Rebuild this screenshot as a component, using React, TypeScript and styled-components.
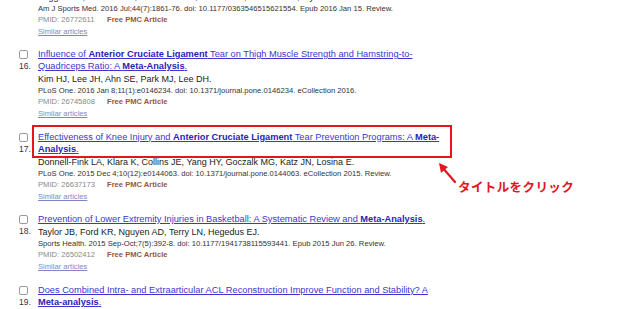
import React from 'react';
import styled, { createGlobalStyle } from 'styled-components';

const GlobalStyle = createGlobalStyle`
  html, body {
    margin: 0;
    padding: 0;
    background: #fff;
  }
  body {
    font-family: "Liberation Sans", Arial, sans-serif;
    overflow: hidden;
  }
`;

const Page = styled.div`
  position: relative;
  width: 640px;
  height: 309px;
  overflow: hidden;
  padding-left: 19px;
  box-sizing: border-box;
`;

const Item = styled.div<{ $cut?: boolean }>`
  display: flex;
  margin-top: ${p => (p.$cut ? '-10.5px' : '0')};
  margin-bottom: 11.5px;
`;

const Marker = styled.div`
  width: 19px;
  flex-shrink: 0;
  display: flex;
  flex-direction: column;
`;

const Checkbox = styled.span`
  display: block;
  width: 7px;
  height: 7px;
  margin-top: 2px;
  border: 1px solid #9a9a9a;
  border-radius: 2px;
  background: #fff;
`;

const Num = styled.span`
  margin-top: 1px;
  font-size: 8.5px;
  line-height: 12px;
  color: #333;
`;

const Content = styled.div`
  width: 407px;
`;

const Title = styled.a`
  position: relative;
  display: block;
  font-size: 9.25px;
  line-height: 12px;
  color: #3b36d0;
  text-decoration: underline;
  cursor: pointer;

  b {
    color: #2a23b8;
  }
`;

const Highlight = styled.span`
  position: absolute;
  top: -6px;
  left: -6px;
  right: -7px;
  bottom: -3px;
  border: 2px solid #e6141e;
  pointer-events: none;
`;

const Authors = styled.div`
  margin-top: 1px;
  font-size: 9px;
  line-height: 12px;
  color: #222;
`;

const Journal = styled.div`
  font-size: 7.65px;
  line-height: 11px;
  color: #333;
`;

const Meta = styled.div`
  display: flex;
  font-size: 7.6px;
  line-height: 12px;
  color: #888;
`;

const Pmid = styled.span`
  width: 69px;
  flex-shrink: 0;
`;

const Free = styled.span`
  font-weight: bold;
  color: #985735;
`;

const Similar = styled.a`
  display: block;
  font-size: 7.6px;
  line-height: 11px;
  color: #8585c4;
  text-decoration: underline;
`;

const Callout = styled.div`
  position: absolute;
  left: 437px;
  top: 162px;
  display: flex;
  align-items: flex-end;
`;

const CalloutText = styled.span`
  margin-left: 1px;
  margin-bottom: -11px;
  font-family: "Noto Sans CJK JP", sans-serif;
  font-weight: bold;
  font-size: 12.5px;
  letter-spacing: 0.4px;
  line-height: 16px;
  color: #e6141e;
  text-shadow: 0 0 2px #fff;
`;

type Article = {
  num?: string;
  title?: React.ReactNode;
  authors: string;
  journal: string;
  pmid: string;
  cut?: boolean;
  highlight?: boolean;
};

const articles: Article[] = [
  {
    cut: true,
    authors: 'Wiggins AJ, Grandhi RK, Schneider DK, Stanfield D, Webster KE, Myer GD.',
    journal: 'Am J Sports Med. 2016 Jul;44(7):1861-76. doi: 10.1177/0363546515621554. Epub 2016 Jan 15. Review.',
    pmid: '26772611',
  },
  {
    num: '16.',
    title: (
      <>
        Influence of <b>Anterior Cruciate Ligament</b> Tear on Thigh Muscle Strength and Hamstring-to-Quadriceps Ratio: A <b>Meta-Analysis</b>.
      </>
    ),
    authors: 'Kim HJ, Lee JH, Ahn SE, Park MJ, Lee DH.',
    journal: 'PLoS One. 2016 Jan 8;11(1):e0146234. doi: 10.1371/journal.pone.0146234. eCollection 2016.',
    pmid: '26745808',
  },
  {
    num: '17.',
    highlight: true,
    title: (
      <>
        Effectiveness of Knee Injury and <b>Anterior Cruciate Ligament</b> Tear Prevention Programs: A <b>Meta-Analysis</b>.
      </>
    ),
    authors: 'Donnell-Fink LA, Klara K, Collins JE, Yang HY, Goczalk MG, Katz JN, Losina E.',
    journal: 'PLoS One. 2015 Dec 4;10(12):e0144063. doi: 10.1371/journal.pone.0144063. eCollection 2015. Review.',
    pmid: '26637173',
  },
  {
    num: '18.',
    title: (
      <>
        Prevention of Lower Extremity Injuries in Basketball: A Systematic Review and <b>Meta-Analysis</b>.
      </>
    ),
    authors: 'Taylor JB, Ford KR, Nguyen AD, Terry LN, Hegedus EJ.',
    journal: 'Sports Health. 2015 Sep-Oct;7(5):392-8. doi: 10.1177/1941738115593441. Epub 2015 Jun 26. Review.',
    pmid: '26502412',
  },
  {
    num: '19.',
    title: (
      <>
        Does Combined Intra- and Extraarticular ACL Reconstruction Improve Function and Stability? A <b>Meta-analysis</b>.
      </>
    ),
    authors: '',
    journal: '',
    pmid: '',
  },
];

const ArticleRow: React.FC<{ a: Article }> = ({ a }) => (
  <Item $cut={a.cut}>
    <Marker>
      {a.num && <Checkbox />}
      {a.num && <Num>{a.num}</Num>}
    </Marker>
    <Content>
      {a.title && (
        <Title>
          {a.title}
          {a.highlight && <Highlight />}
        </Title>
      )}
      {a.authors && <Authors>{a.authors}</Authors>}
      {a.journal && <Journal>{a.journal}</Journal>}
      {a.pmid && (
        <Meta>
          <Pmid>PMID: {a.pmid}</Pmid>
          <Free>Free PMC Article</Free>
        </Meta>
      )}
      {a.pmid && <Similar>Similar articles</Similar>}
    </Content>
  </Item>
);

export default function App() {
  return (
    <>
      <GlobalStyle />
      <Page>
        {articles.map((a, i) => (
          <ArticleRow key={i} a={a} />
        ))}
        <Callout>
          <svg width="20" height="22" viewBox="0 0 20 22">
            <line x1="18" y1="20" x2="5" y2="5" stroke="#e6141e" strokeWidth="2.2" strokeLinecap="round" />
            <polygon points="2,1 11,5 4,11" fill="#e6141e" />
          </svg>
          <CalloutText>タイトルをクリック</CalloutText>
        </Callout>
      </Page>
    </>
  );
}
